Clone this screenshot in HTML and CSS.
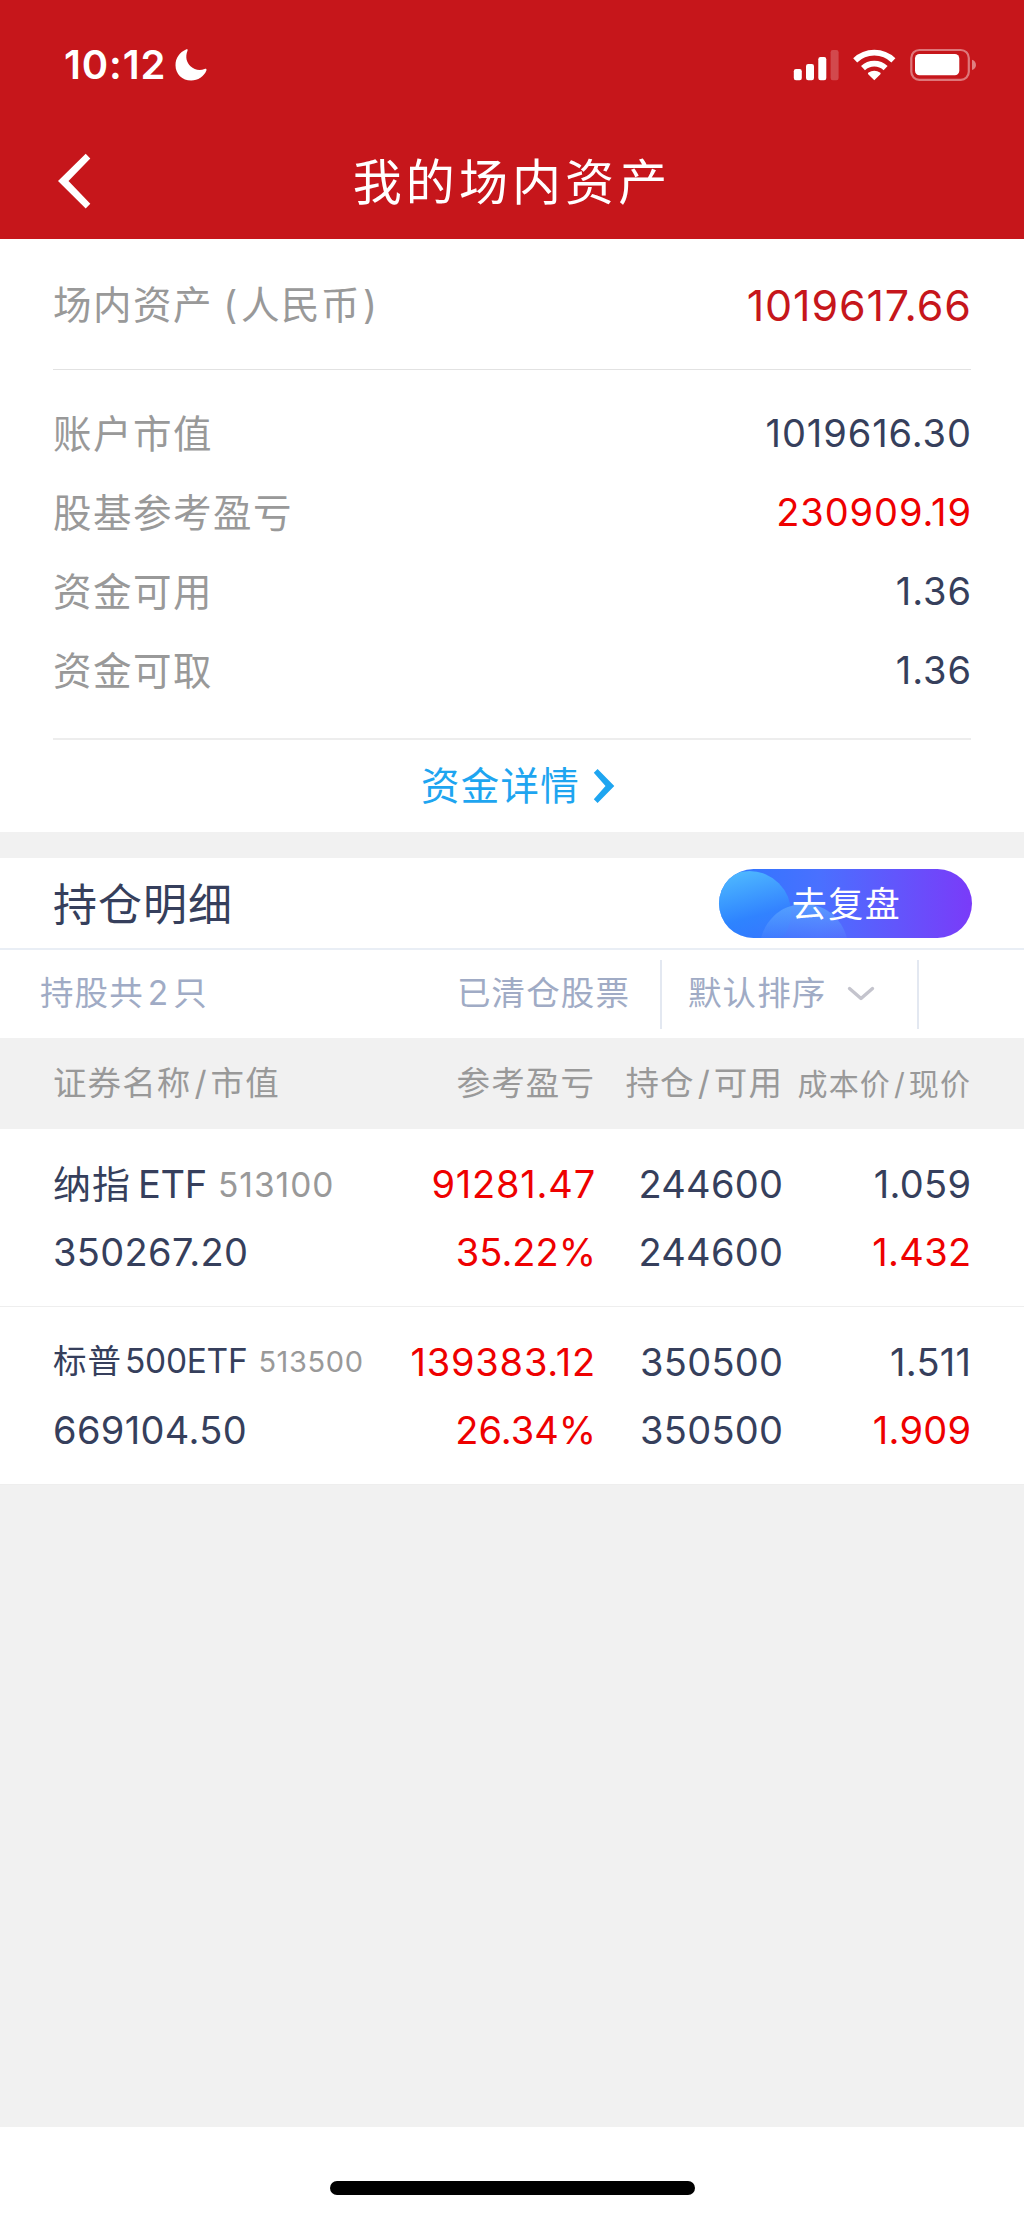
FILE: index.html
```html
<!DOCTYPE html>
<html lang="zh-CN">
<head>
<meta charset="utf-8">
<title>我的场内资产</title>
<link rel="stylesheet" href="styles.css">
</head>
<body>
<header class="top">
  <div class="status">
    <div class="status-left">
      <span class="time">10:12</span>
      <svg class="moon" width="32" height="32" viewBox="0 0 32 32"><path d="M11 .6C12.200 0 13 .6 12.500 1.700C10 8 11.600 13.400 15.500 17.200C19.300 20.800 24.500 22 29.600 20C31 19.500 31.900 20.200 31.400 21.500C29 27.500 23 31.500 16.200 31.500C7.200 31.500.5 25 .5 16.200C.5 9.200 4.700 3.200 11 .6Z" fill="#fff"/></svg>
    </div>
    <svg class="indicators" width="184" height="34" viewBox="793 48 184 34">
      <g fill="#fff">
        <rect x="793.800" y="69" width="8" height="11.300" rx="2.200"/>
        <rect x="806" y="64" width="8" height="16.300" rx="2.200"/>
        <rect x="818.300" y="57" width="8" height="23.300" rx="2.200"/>
        <rect x="830.600" y="50" width="8" height="30.300" rx="2.200" opacity=".22"/>
        <path d="M874.300 80.200L868.200 74.200C867.600 73.500 868 73 868.600 72.600A9.300 9.300 0 0 1 880 72.600C880.600 73 881 73.500 880.400 74.200Z"/>
      </g>
      <g fill="none" stroke="#fff" stroke-width="5.800">
        <path d="M863 68.200A16.500 16.500 0 0 1 885.600 68.200"/>
        <path d="M855.200 60.400A27.500 27.500 0 0 1 893.400 60.400"/>
      </g>
      <rect x="911.300" y="50" width="57.500" height="29.800" rx="8" fill="none" stroke="#fff" stroke-width="2.200" opacity=".42"/>
      <rect x="915" y="54" width="44.300" height="21.300" rx="4.500" fill="#fff"/>
      <path d="M972 59.800C977.300 61.500 977.300 68.300 972 70Z" fill="#fff" opacity=".45"/>
    </svg>
  </div>
  <div class="nav">
    <svg class="back" width="34" height="58" viewBox="57 152 34 58"><path d="M58 181L85.700 153.800L90.300 158.400L68.500 181L90.300 203.800L85.700 208.600Z" fill="#fff"/></svg>
    <h1 class="title">我的场内资产</h1>
  </div>
</header>

<section class="summary">
  <div class="total"><span class="label">场内资产 <i class="open">(</i>人民币<i>)</i></span><span class="amount">1019617.66</span></div>
  <dl class="figures">
    <div class="figure"><dt>账户市值</dt><dd>1019616.30</dd></div>
    <div class="figure"><dt>股基参考盈亏</dt><dd class="up">230909.19</dd></div>
    <div class="figure"><dt>资金可用</dt><dd>1.36</dd></div>
    <div class="figure"><dt>资金可取</dt><dd>1.36</dd></div>
  </dl>
  <a class="detail">资金详情<svg width="22" height="36" viewBox="0 0 22 36"><path d="M.8 4.800L4.600 1L21.300 18L4.600 35L.8 31.200L12.500 18Z" fill="#1ea5f0"/></svg></a>
</section>

<section class="holdings">
  <div class="heading">
    <h2>持仓明细</h2>
    <a class="review">去复盘</a>
  </div>
  <div class="filters">
    <span class="count">持股共<b>2</b>只</span>
    <span class="cleared">已清仓股票</span>
    <span class="sort">默认排序<svg width="28" height="16" viewBox="0 0 28 16"><path d="M2.500 2.500L14 12.500L25.500 2.500" fill="none" stroke="#c4c4cd" stroke-width="3.400" stroke-linecap="round" stroke-linejoin="round"/></svg></span>
  </div>
  <div class="cols thead">
    <span class="c1">证券名称<i>/</i>市值</span><span>参考盈亏</span><span>持仓<i>/</i>可用</span><span class="small">成本价<i>/</i>现价</span>
  </div>
  <div class="cols row">
    <span class="c1 name">纳指<b>ETF</b><em>513100</em></span><span class="up gain">91281.47</span><span class="qty">244600</span><span class="price">1.059</span>
    <span class="c1 value">350267.20</span><span class="up rate">35.22%</span><span class="qty">244600</span><span class="price up">1.432</span>
  </div>
  <div class="cols row">
    <span class="c1 name compact">标普<b>500ETF</b><em>513500</em></span><span class="up gain">139383.12</span><span class="qty">350500</span><span class="price">1.511</span>
    <span class="c1 value">669104.50</span><span class="up rate">26.34%</span><span class="qty">350500</span><span class="price up">1.909</span>
  </div>
</section>
<footer class="home"><div class="bar"></div></footer>
</body>
</html>
```
FILE: styles.css
```css
* { box-sizing: border-box; }
body {
  margin: 0;
  min-height: 2217px;
  display: flex;
  flex-direction: column;
  background: #f1f1f1;
  color: #363f5c;
  font-family: Inter, "Noto Sans CJK SC", sans-serif;
  font-size: 38px;
  line-height: 1;
}
h1, h2, dl, dd { margin: 0; font-weight: 400; }
b, em, i { font-style: normal; font-weight: 400; }
.up { color: #ee0000; }

.top { height: 239px; background: #c6161b; color: #fff; }
.status {
  height: 130px;
  padding: 0 47px 0 64px;
  display: flex;
  align-items: center;
  justify-content: space-between;
}
.status-left { display: flex; align-items: center; gap: 9px; }
.time { font-size: 40px; font-weight: 600; letter-spacing: .9px; }
.nav {
  height: 101px;
  padding: 0 57px;
  display: grid;
  grid-template-columns: 34px 1fr 34px;
  align-items: center;
}
.title { padding-top: 3px; font-size: 49px; letter-spacing: 4.100px; text-align: center; }

.summary { height: 593px; padding: 0 53px; background: #fff; }
.total {
  height: 131px;
  padding-top: 2px;
  display: flex;
  align-items: center;
  justify-content: space-between;
  border-bottom: 1px solid #e2e2e2;
}
.label, dt { font-size: 38.500px; letter-spacing: 1.500px; color: #999; }
dt { padding-top: 1px; }
.label i { padding: 0 2px; }
.label .open { margin-left: -4px; }
.amount { margin-right: -.8px; font-size: 43px; letter-spacing: .85px; color: #c6161b; }
.figures { height: 370px; padding-top: 24px; border-bottom: 2px solid #ededed; }
.figure { height: 79px; display: flex; align-items: center; justify-content: space-between; }
.figure dd { margin-right: -.9px; padding-bottom: 2px; letter-spacing: .92px; }
.detail {
  height: 92px;
  padding-left: 12px;
  display: flex;
  align-items: center;
  justify-content: center;
  gap: 13px;
  font-size: 38.500px;
  letter-spacing: 1.200px;
  color: #1ea5f0;
}

.holdings { margin-top: 26px; background: #fff; }
.heading {
  height: 92px;
  padding: 0 52px 0 53px;
  display: flex;
  align-items: center;
  justify-content: space-between;
  border-bottom: 2px solid #e9eef5;
}
h2 { padding-top: 3px; font-size: 44px; letter-spacing: 1px; }
.review {
  position: relative;
  z-index: 0;
  overflow: hidden;
  width: 253px;
  height: 69px;
  padding: 2px 0 0 2px;
  border-radius: 35px;
  display: flex;
  align-items: center;
  justify-content: center;
  font-size: 35px;
  letter-spacing: 1.500px;
  color: #fff;
  background: linear-gradient(90deg, #2a78ff, #4a70ff 40%, #7a3bf9);
}
/* translucent bubbles behind the button text */
.review::before, .review::after {
  content: "";
  position: absolute;
  z-index: -1;
  border-radius: 50%;
}
.review::before {
  left: -11px;
  top: 2px;
  width: 83px;
  height: 83px;
  background: linear-gradient(165deg, #50bbff 5%, rgba(45, 140, 255, .6) 55%, rgba(45, 120, 255, .2) 85%);
}
.review::after {
  left: 41px;
  top: 35px;
  width: 88px;
  height: 88px;
  background: linear-gradient(180deg, rgba(95, 170, 255, .75), rgba(95, 130, 255, .2) 40%);
}
.filters {
  height: 88px;
  display: grid;
  grid-template-columns: 457px 205px 257px 1fr;
  align-items: center;
  font-size: 33.500px;
  letter-spacing: 1.100px;
  color: #a0abc5;
}
.count { padding-left: 40px; }
.count b { padding: 0 4px; }
.cleared, .sort { height: 69px; display: flex; align-items: center; border-right: 2px solid #e3e8f1; }
.sort { padding-left: 26px; gap: 21px; }

.cols {
  padding: 0 53px;
  display: grid;
  grid-template-columns: 313px 229px 188px 188px;
  align-items: center;
  text-align: right;
}
.cols > span { white-space: nowrap; }
.cols .c1 { text-align: left; }
.thead { height: 91px; background: #f1f1f1; font-size: 33.500px; letter-spacing: 1.100px; color: #999; }
.thead i { padding: 0 3px; }
.small { font-size: 30px; }
.row { height: 178px; padding-top: 21px; grid-template-rows: 68px 68px; border-bottom: 1px solid #eee; }
.cols .gain { margin-right: -1px; letter-spacing: .8px; }
.cols .rate { margin-right: -1px; }
.cols .qty, .cols .price { margin-right: -.4px; letter-spacing: .3px; }
.value { letter-spacing: .35px; }
.name { letter-spacing: 1px; }
.name b { margin-left: 7px; letter-spacing: -.3px; }
.name em { margin-left: 11px; font-size: 33.500px; color: #999; vertical-align: 1px; }
.compact { font-size: 33.500px; }
.compact b { margin-left: 3px; }
.compact em { font-size: 29px; letter-spacing: .6px; }

.home { height: 90px; margin-top: auto; padding-top: 54px; background: #fff; }
.bar { width: 365px; height: 14px; margin: 0 auto; border-radius: 7px; background: #000; }
```
